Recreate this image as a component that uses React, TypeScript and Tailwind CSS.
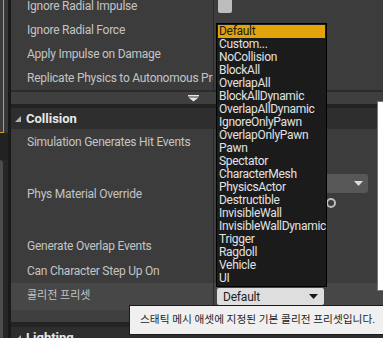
import React from "react";

const presets = [
  "Default",
  "Custom...",
  "NoCollision",
  "BlockAll",
  "OverlapAll",
  "BlockAllDynamic",
  "OverlapAllDynamic",
  "IgnoreOnlyPawn",
  "OverlapOnlyPawn",
  "Pawn",
  "Spectator",
  "CharacterMesh",
  "PhysicsActor",
  "Destructible",
  "InvisibleWall",
  "InvisibleWallDynamic",
  "Trigger",
  "Ragdoll",
  "Vehicle",
  "UI",
];

function Row({
  label,
  className,
  children,
  ko,
}: {
  label: string;
  className: string;
  children?: React.ReactNode;
  ko?: boolean;
}) {
  return (
    <div className={`flex shrink-0 ${className}`}>
      <div
        className={`w-[202px] flex items-center pl-[16px] text-[#c4c4c4] whitespace-nowrap overflow-hidden ${
          ko ? "text-[11px]" : "text-[12px] tracking-[-0.25px]"
        }`}
      >
        {label}
      </div>
      <div className="w-px bg-[#2a2a2a]" />
      <div className="flex-1 flex items-center">{children}</div>
    </div>
  );
}

function AdvancedArrow() {
  return (
    <div className="h-[12px] shrink-0 flex items-center justify-center pr-[8px] bg-[#3f3f3f]">
      <svg width="11" height="7" viewBox="0 0 11 7">
        <rect x="0" y="0" width="11" height="1.5" fill="#e6e6e6" />
        <path d="M0.5 2.5 H10.5 L5.5 6.5 Z" fill="#e6e6e6" />
      </svg>
    </div>
  );
}

function Header({ title }: { title: string }) {
  return (
    <div className="h-[21px] shrink-0 flex items-center gap-[5px] pl-[4px] bg-[#2e2e2e]">
      <svg width="6" height="6" viewBox="0 0 6 6">
        <path d="M6 0 V6 H0 Z" fill="#b4b4b4" />
      </svg>
      <span className="text-[13px] font-bold text-[#e8e8e8]">{title}</span>
    </div>
  );
}

export default function App() {
  return (
    <div className="relative w-[383px] h-[338px] overflow-hidden flex bg-[#1c1c1c] font-[Roboto,'Noto_Sans_CJK_KR',sans-serif]">
      {/* left dock strip */}
      <div className="w-[8px] flex flex-col shrink-0">
        <div className="h-[133px] flex bg-[#383838]">
          <div className="w-[4px] bg-[#3c3c3c] border-r border-b border-[#d99b1c]" />
        </div>
        <div className="h-[27px] bg-[#222]" />
        <div className="flex-1 flex">
          <div className="w-[3px] bg-[#4c4c4c] rounded-tr-[3px]" />
          <div className="flex-1 bg-[#272727]" />
        </div>
      </div>
      <div className="w-[3px] shrink-0 bg-[#1a1a1a]" />

      {/* details panel */}
      <div className="flex-1 flex flex-col -mt-[6px] bg-[#3c3c3c]">
        <Row label="Ignore Radial Impulse" className="h-[24px]">
          <div className="ml-[4px] w-[14px] h-[14px] rounded-[2px] bg-[#bdbdbd]" />
        </Row>
        <Row label="Ignore Radial Force" className="h-[24px]" />
        <Row label="Apply Impulse on Damage" className="h-[24px]" />
        <Row label="Replicate Physics to Autonomous Proxy" className="h-[24px]" />
        <div className="h-[2px] shrink-0 bg-[#2c2c2c]" />
        <AdvancedArrow />
        <div className="h-[4px] shrink-0 bg-[#232323]" />
        <Header title="Collision" />
        <Row label="Simulation Generates Hit Events" className="h-[26px]" />
        <Row label="Phys Material Override" className="h-[78px]">
          <div className="h-full flex items-start gap-[6px] pl-[4px] pt-[19px]">
            <div className="w-[64px] h-[52px] bg-[#2a2a2a]" />
            <div className="flex flex-col">
              <div className="w-[80px] h-[19px] rounded-[3px] bg-[#575757] flex items-center justify-end pr-[5px]">
                <svg width="9" height="5" viewBox="0 0 9 5">
                  <path d="M0 0 H9 L4.5 5 Z" fill="#dcdcdc" />
                </svg>
              </div>
              <div className="mt-[5px] ml-[38px] w-[10px] h-[10px] rounded-full border-2 border-[#bdbdbd]" />
            </div>
          </div>
        </Row>
        <Row label="Generate Overlap Events" className="h-[25px]" />
        <Row label="Can Character Step Up On" className="h-[25px]" />
        <Row label="콜리전 프리셋" className="h-[27px] bg-[#474747]" ko>
          <div className="ml-[3px] w-[107px] h-[17px] rounded-[2px] bg-[#dedede] flex items-center justify-between pl-[6px] pr-[6px] text-[12px] tracking-[-0.2px] text-[#1e1e1e]">
            <span>Default</span>
            <svg width="9" height="5" viewBox="0 0 9 5">
              <path d="M0 0 H9 L4.5 5 Z" fill="#1a1a1a" />
            </svg>
          </div>
        </Row>
        <AdvancedArrow />
        <div className="h-[5px] shrink-0 bg-[#232323]" />
        <Header title="Lighting" />
      </div>

      {/* preset dropdown */}
      <div className="absolute left-[216px] top-[23px] w-[111px] bg-[#1b1b1b] border border-black p-px">
        {presets.map((p, i) => (
          <div
            key={p}
            className={`h-[13px] leading-[13px] text-[12px] tracking-[-0.3px] pl-px whitespace-nowrap ${
              i === 0 ? "bg-[#e2a30c] text-[#1a1a1a]" : "text-[#e2e2e2]"
            }`}
          >
            {p}
          </div>
        ))}
      </div>

      {/* partially visible window at right */}
      <div className="absolute left-[377px] top-[101px] w-[12px] h-[190px] bg-white border border-[#777]" />

      {/* tooltip */}
      <div className="absolute left-[129px] top-[305px] w-[270px] h-[30px] flex items-center pl-[10px] bg-[#f0f0f0] border border-[#1a1a1a] text-[10.7px] text-[#1e1e1e] whitespace-nowrap">
        스태틱 메시 애셋에 지정된 기본 콜리전 프리셋입니다.
      </div>
    </div>
  );
}
